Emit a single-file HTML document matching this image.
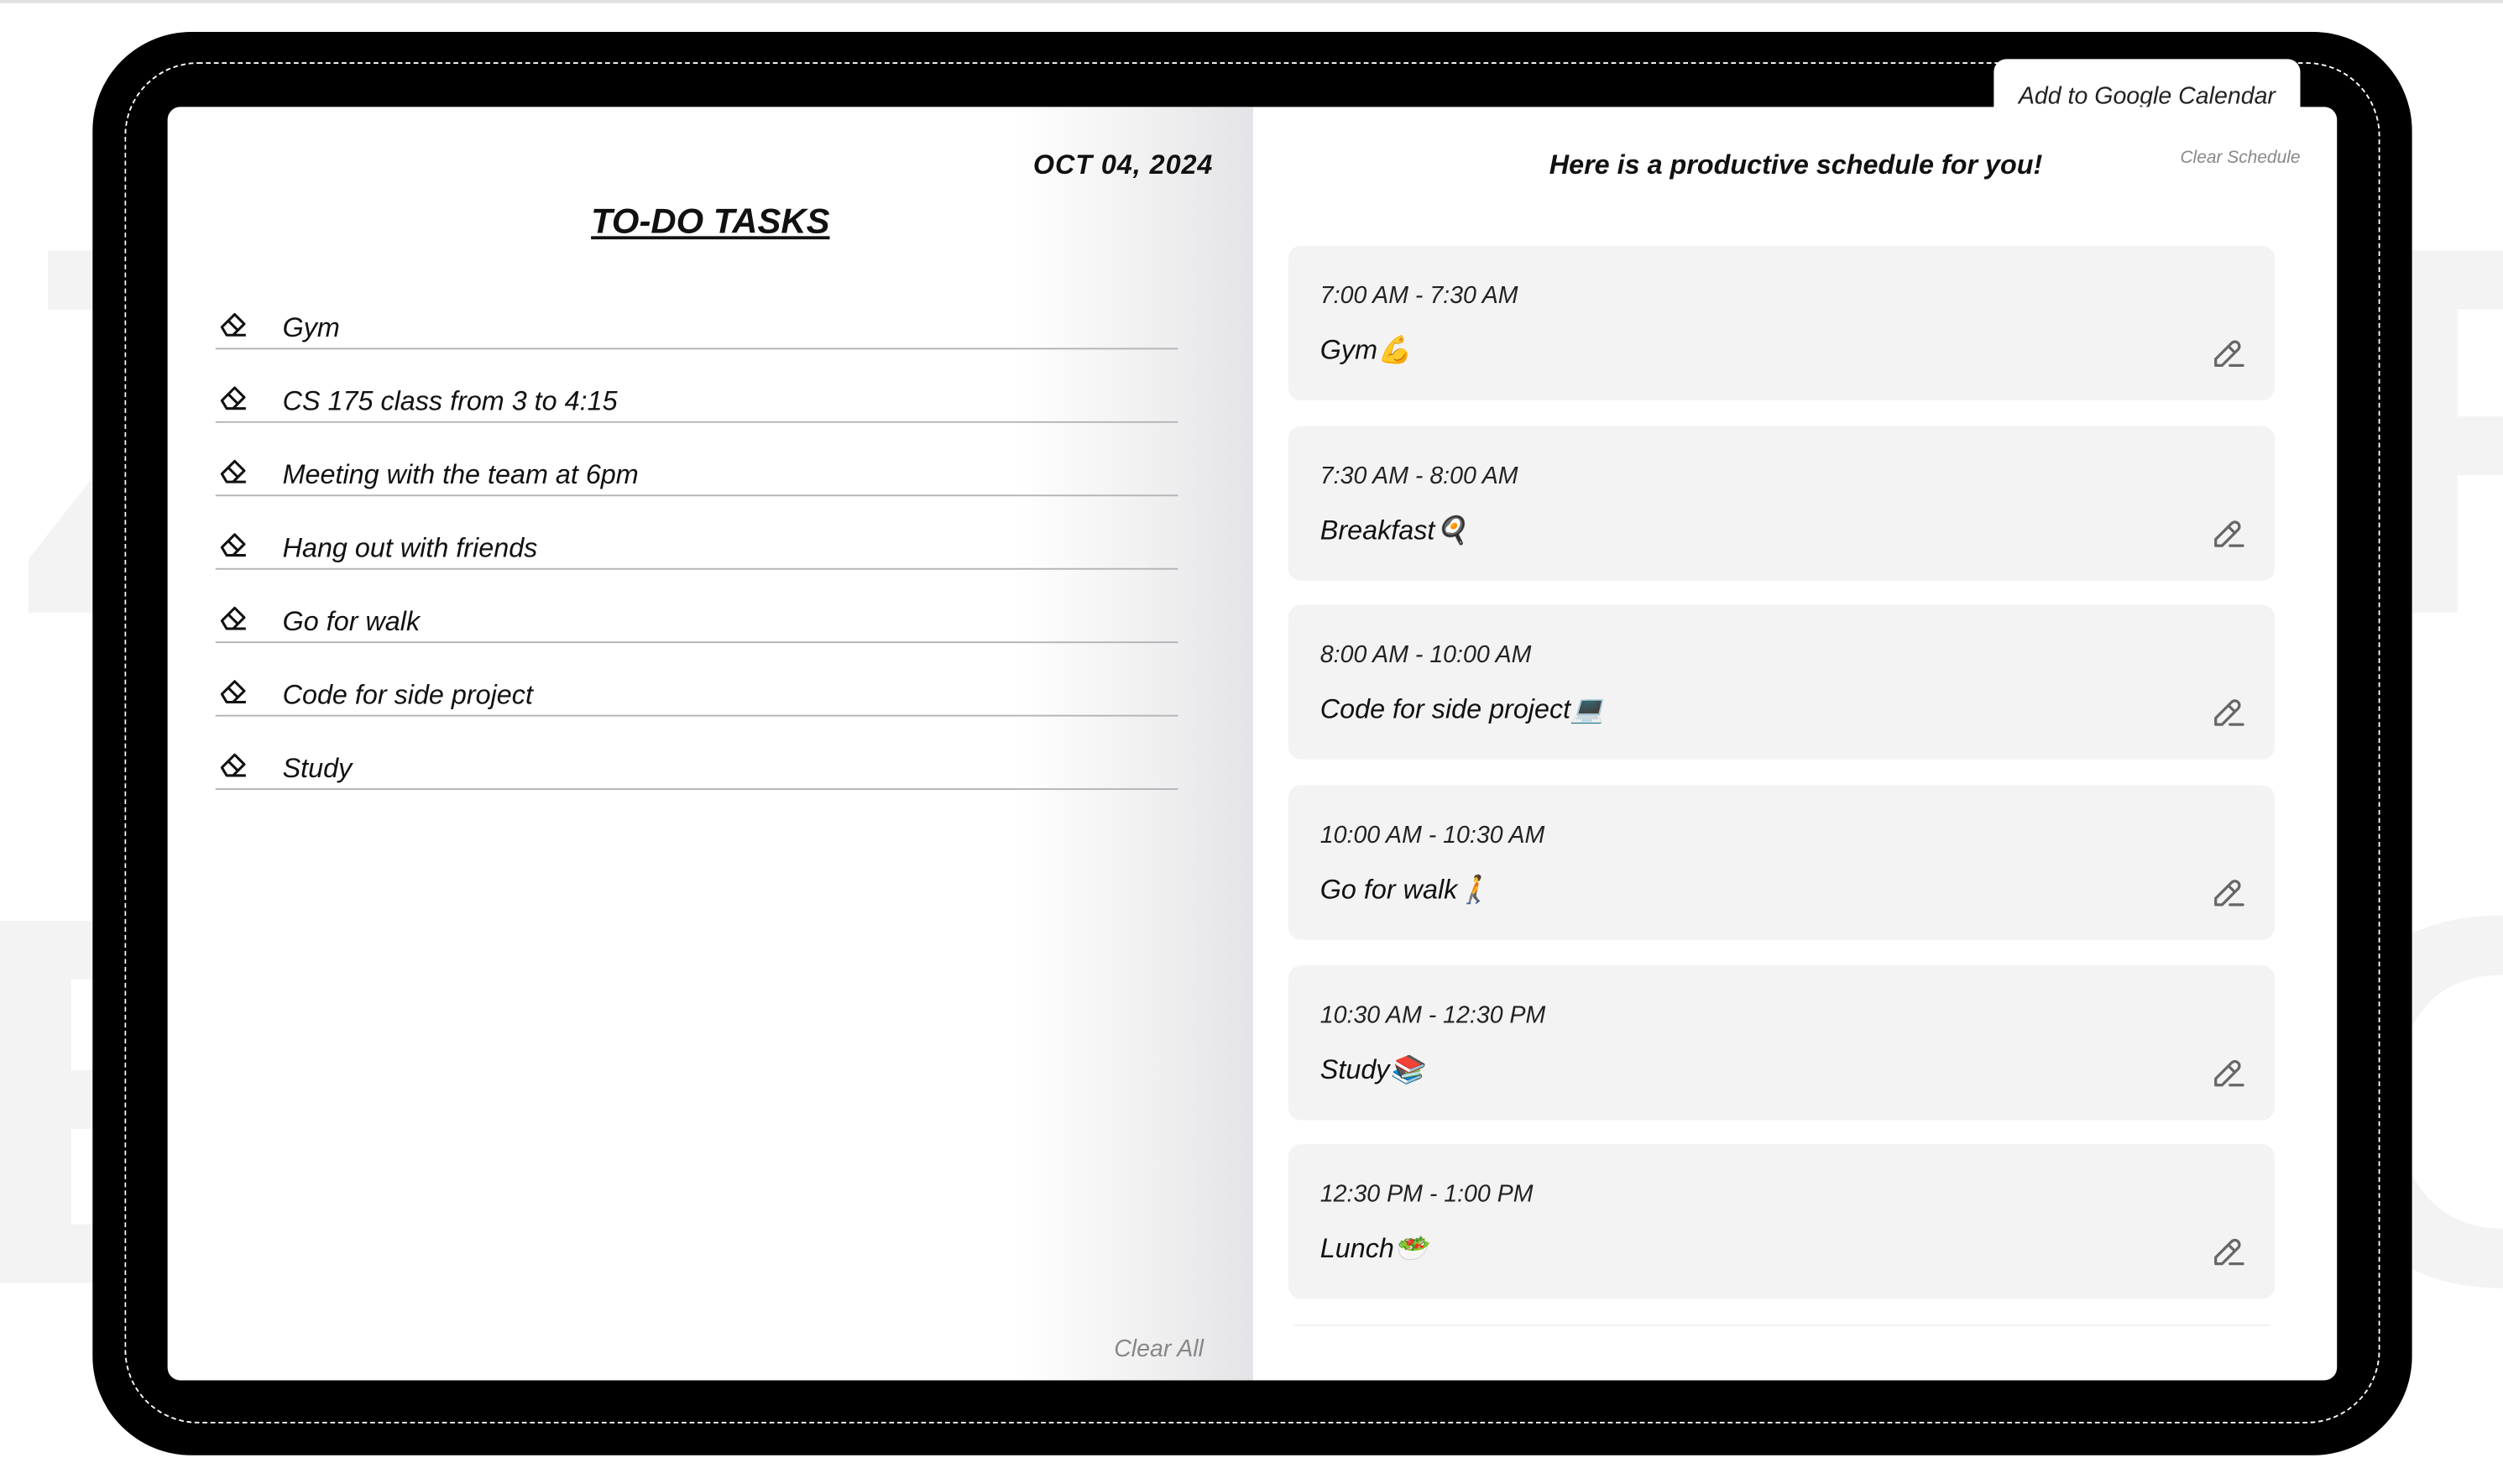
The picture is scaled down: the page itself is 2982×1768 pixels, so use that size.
<!DOCTYPE html>
<html><head><meta charset="utf-8"><style>
html,body{margin:0;padding:0;width:2982px;height:1768px;overflow:hidden;background:#fff;}
#s{position:absolute;left:0;top:0;width:1568px;height:930px;overflow:hidden;transform:scale(1.9018,1.9011);transform-origin:0 0;font-family:"Liberation Sans",sans-serif;}
.a{position:absolute;}
.bg{position:absolute;color:#f3f3f4;font-weight:bold;font-family:"Liberation Sans",sans-serif;line-height:1;}
.hw{font-family:"Liberation Sans Narrow","Liberation Sans",sans-serif;font-style:italic;font-weight:normal;}
.task{position:absolute;left:135px;width:603px;height:46px;border-bottom:1px solid #b4b4b8;}
.task svg{position:absolute;left:2px;top:22px;}
.task span{position:absolute;left:42px;top:24px;font-size:17px;color:#111;}
.card{position:absolute;left:807px;width:618px;height:97px;background:#f3f3f3;border-radius:8px;}
.card .t{position:absolute;left:20px;top:23px;font-size:15px;color:#222;}
.card .n{position:absolute;left:20px;top:56px;font-size:17px;color:#111;}
.card svg{position:absolute;left:578px;top:58px;}
</style></head><body><div id="s">
<div class="a" style="left:0;top:0;width:1568px;height:2px;background:#e2e2e2"></div>
<div class="bg" style="left:8px;top:105px;font-size:330px;">Z</div>
<div class="bg" style="left:-25px;top:525px;font-size:330px;">E</div>
<div class="bg" style="left:1470px;top:105px;font-size:330px;">R</div>
<div class="bg" style="left:1440px;top:525px;font-size:330px;">O</div>
<div class="a" style="left:58px;top:20px;width:1453px;height:892px;background:#000;border-radius:62px;"></div>
<div class="a" style="left:78px;top:39px;width:1413px;height:853px;border:1px dashed #fff;border-radius:46px;box-sizing:border-box;"></div>
<div class="a" style="left:1249px;top:37px;width:192px;height:40px;background:#fff;border-radius:8px 8px 0 0;"></div>
<div class="a hw" style="left:1249px;top:52px;width:192px;text-align:center;font-size:15px;color:#222;">Add to Google Calendar</div>
<div class="a" style="left:105px;top:67px;width:1359px;height:798px;background:#fff;border-radius:8px;overflow:hidden;">
 <div class="a" style="left:0;top:0;width:680px;height:798px;background:linear-gradient(to right,#fff 0%,#fff 78%,#f1f1f2 90%,#e4e4e7 100%);"></div>
</div>
<div class="a" style="left:560px;top:94px;width:200px;text-align:right;font-size:17px;font-weight:bold;font-style:italic;color:#111;letter-spacing:0.5px;">OCT 04, 2024</div>
<div class="a" style="left:295px;top:126px;width:300px;text-align:center;font-size:22px;font-weight:bold;font-style:italic;color:#111;text-decoration:underline;">TO-DO TASKS</div>
<div class="task" style="top:172px"><svg width="20" height="18" viewBox="0 0 20 18"><path d="M2 11 L10 3 L16 9 L9 16 L5 16 Z M6 7 L12 13 M9 16 L17 16" fill="none" stroke="#111" stroke-width="1.6" stroke-linejoin="round"/></svg><span class="hw">Gym</span></div>
<div class="task" style="top:218px"><svg width="20" height="18" viewBox="0 0 20 18"><path d="M2 11 L10 3 L16 9 L9 16 L5 16 Z M6 7 L12 13 M9 16 L17 16" fill="none" stroke="#111" stroke-width="1.6" stroke-linejoin="round"/></svg><span class="hw">CS 175 class from 3 to 4:15</span></div>
<div class="task" style="top:264px"><svg width="20" height="18" viewBox="0 0 20 18"><path d="M2 11 L10 3 L16 9 L9 16 L5 16 Z M6 7 L12 13 M9 16 L17 16" fill="none" stroke="#111" stroke-width="1.6" stroke-linejoin="round"/></svg><span class="hw">Meeting with the team at 6pm</span></div>
<div class="task" style="top:310px"><svg width="20" height="18" viewBox="0 0 20 18"><path d="M2 11 L10 3 L16 9 L9 16 L5 16 Z M6 7 L12 13 M9 16 L17 16" fill="none" stroke="#111" stroke-width="1.6" stroke-linejoin="round"/></svg><span class="hw">Hang out with friends</span></div>
<div class="task" style="top:356px"><svg width="20" height="18" viewBox="0 0 20 18"><path d="M2 11 L10 3 L16 9 L9 16 L5 16 Z M6 7 L12 13 M9 16 L17 16" fill="none" stroke="#111" stroke-width="1.6" stroke-linejoin="round"/></svg><span class="hw">Go for walk</span></div>
<div class="task" style="top:402px"><svg width="20" height="18" viewBox="0 0 20 18"><path d="M2 11 L10 3 L16 9 L9 16 L5 16 Z M6 7 L12 13 M9 16 L17 16" fill="none" stroke="#111" stroke-width="1.6" stroke-linejoin="round"/></svg><span class="hw">Code for side project</span></div>
<div class="task" style="top:448px"><svg width="20" height="18" viewBox="0 0 20 18"><path d="M2 11 L10 3 L16 9 L9 16 L5 16 Z M6 7 L12 13 M9 16 L17 16" fill="none" stroke="#111" stroke-width="1.6" stroke-linejoin="round"/></svg><span class="hw">Study</span></div>
<div class="a hw" style="left:690px;top:837px;width:64px;text-align:right;font-size:15px;color:#888;">Clear All</div>
<div class="a" style="left:900px;top:94px;width:450px;text-align:center;font-size:17px;font-weight:bold;font-style:italic;color:#111;">Here is a productive schedule for you!</div>
<div class="a hw" style="left:1350px;top:93px;width:91px;text-align:right;font-size:11px;color:#888;">Clear Schedule</div>
<div class="card" style="top:154px"><div class="t hw">7:00 AM - 7:30 AM</div><div class="n hw">Gym💪</div><svg width="22" height="20" viewBox="0 0 22 20"><path d="M3 17 L3 13 L13 3 A2.5 2.5 0 0 1 17 7 L7 17 Z M11 5 L15 9 M12 17 L20 17" fill="none" stroke="#666" stroke-width="1.7" stroke-linejoin="round" stroke-linecap="round"/></svg></div>
<div class="card" style="top:267px"><div class="t hw">7:30 AM - 8:00 AM</div><div class="n hw">Breakfast🍳</div><svg width="22" height="20" viewBox="0 0 22 20"><path d="M3 17 L3 13 L13 3 A2.5 2.5 0 0 1 17 7 L7 17 Z M11 5 L15 9 M12 17 L20 17" fill="none" stroke="#666" stroke-width="1.7" stroke-linejoin="round" stroke-linecap="round"/></svg></div>
<div class="card" style="top:379px"><div class="t hw">8:00 AM - 10:00 AM</div><div class="n hw">Code for side project💻</div><svg width="22" height="20" viewBox="0 0 22 20"><path d="M3 17 L3 13 L13 3 A2.5 2.5 0 0 1 17 7 L7 17 Z M11 5 L15 9 M12 17 L20 17" fill="none" stroke="#666" stroke-width="1.7" stroke-linejoin="round" stroke-linecap="round"/></svg></div>
<div class="card" style="top:492px"><div class="t hw">10:00 AM - 10:30 AM</div><div class="n hw">Go for walk🚶</div><svg width="22" height="20" viewBox="0 0 22 20"><path d="M3 17 L3 13 L13 3 A2.5 2.5 0 0 1 17 7 L7 17 Z M11 5 L15 9 M12 17 L20 17" fill="none" stroke="#666" stroke-width="1.7" stroke-linejoin="round" stroke-linecap="round"/></svg></div>
<div class="card" style="top:605px"><div class="t hw">10:30 AM - 12:30 PM</div><div class="n hw">Study📚</div><svg width="22" height="20" viewBox="0 0 22 20"><path d="M3 17 L3 13 L13 3 A2.5 2.5 0 0 1 17 7 L7 17 Z M11 5 L15 9 M12 17 L20 17" fill="none" stroke="#666" stroke-width="1.7" stroke-linejoin="round" stroke-linecap="round"/></svg></div>
<div class="card" style="top:717px"><div class="t hw">12:30 PM - 1:00 PM</div><div class="n hw">Lunch🥗</div><svg width="22" height="20" viewBox="0 0 22 20"><path d="M3 17 L3 13 L13 3 A2.5 2.5 0 0 1 17 7 L7 17 Z M11 5 L15 9 M12 17 L20 17" fill="none" stroke="#666" stroke-width="1.7" stroke-linejoin="round" stroke-linecap="round"/></svg></div>
<div class="a" style="left:810px;top:830px;width:612px;height:1px;background:#efefef;"></div>
</div></body></html>
